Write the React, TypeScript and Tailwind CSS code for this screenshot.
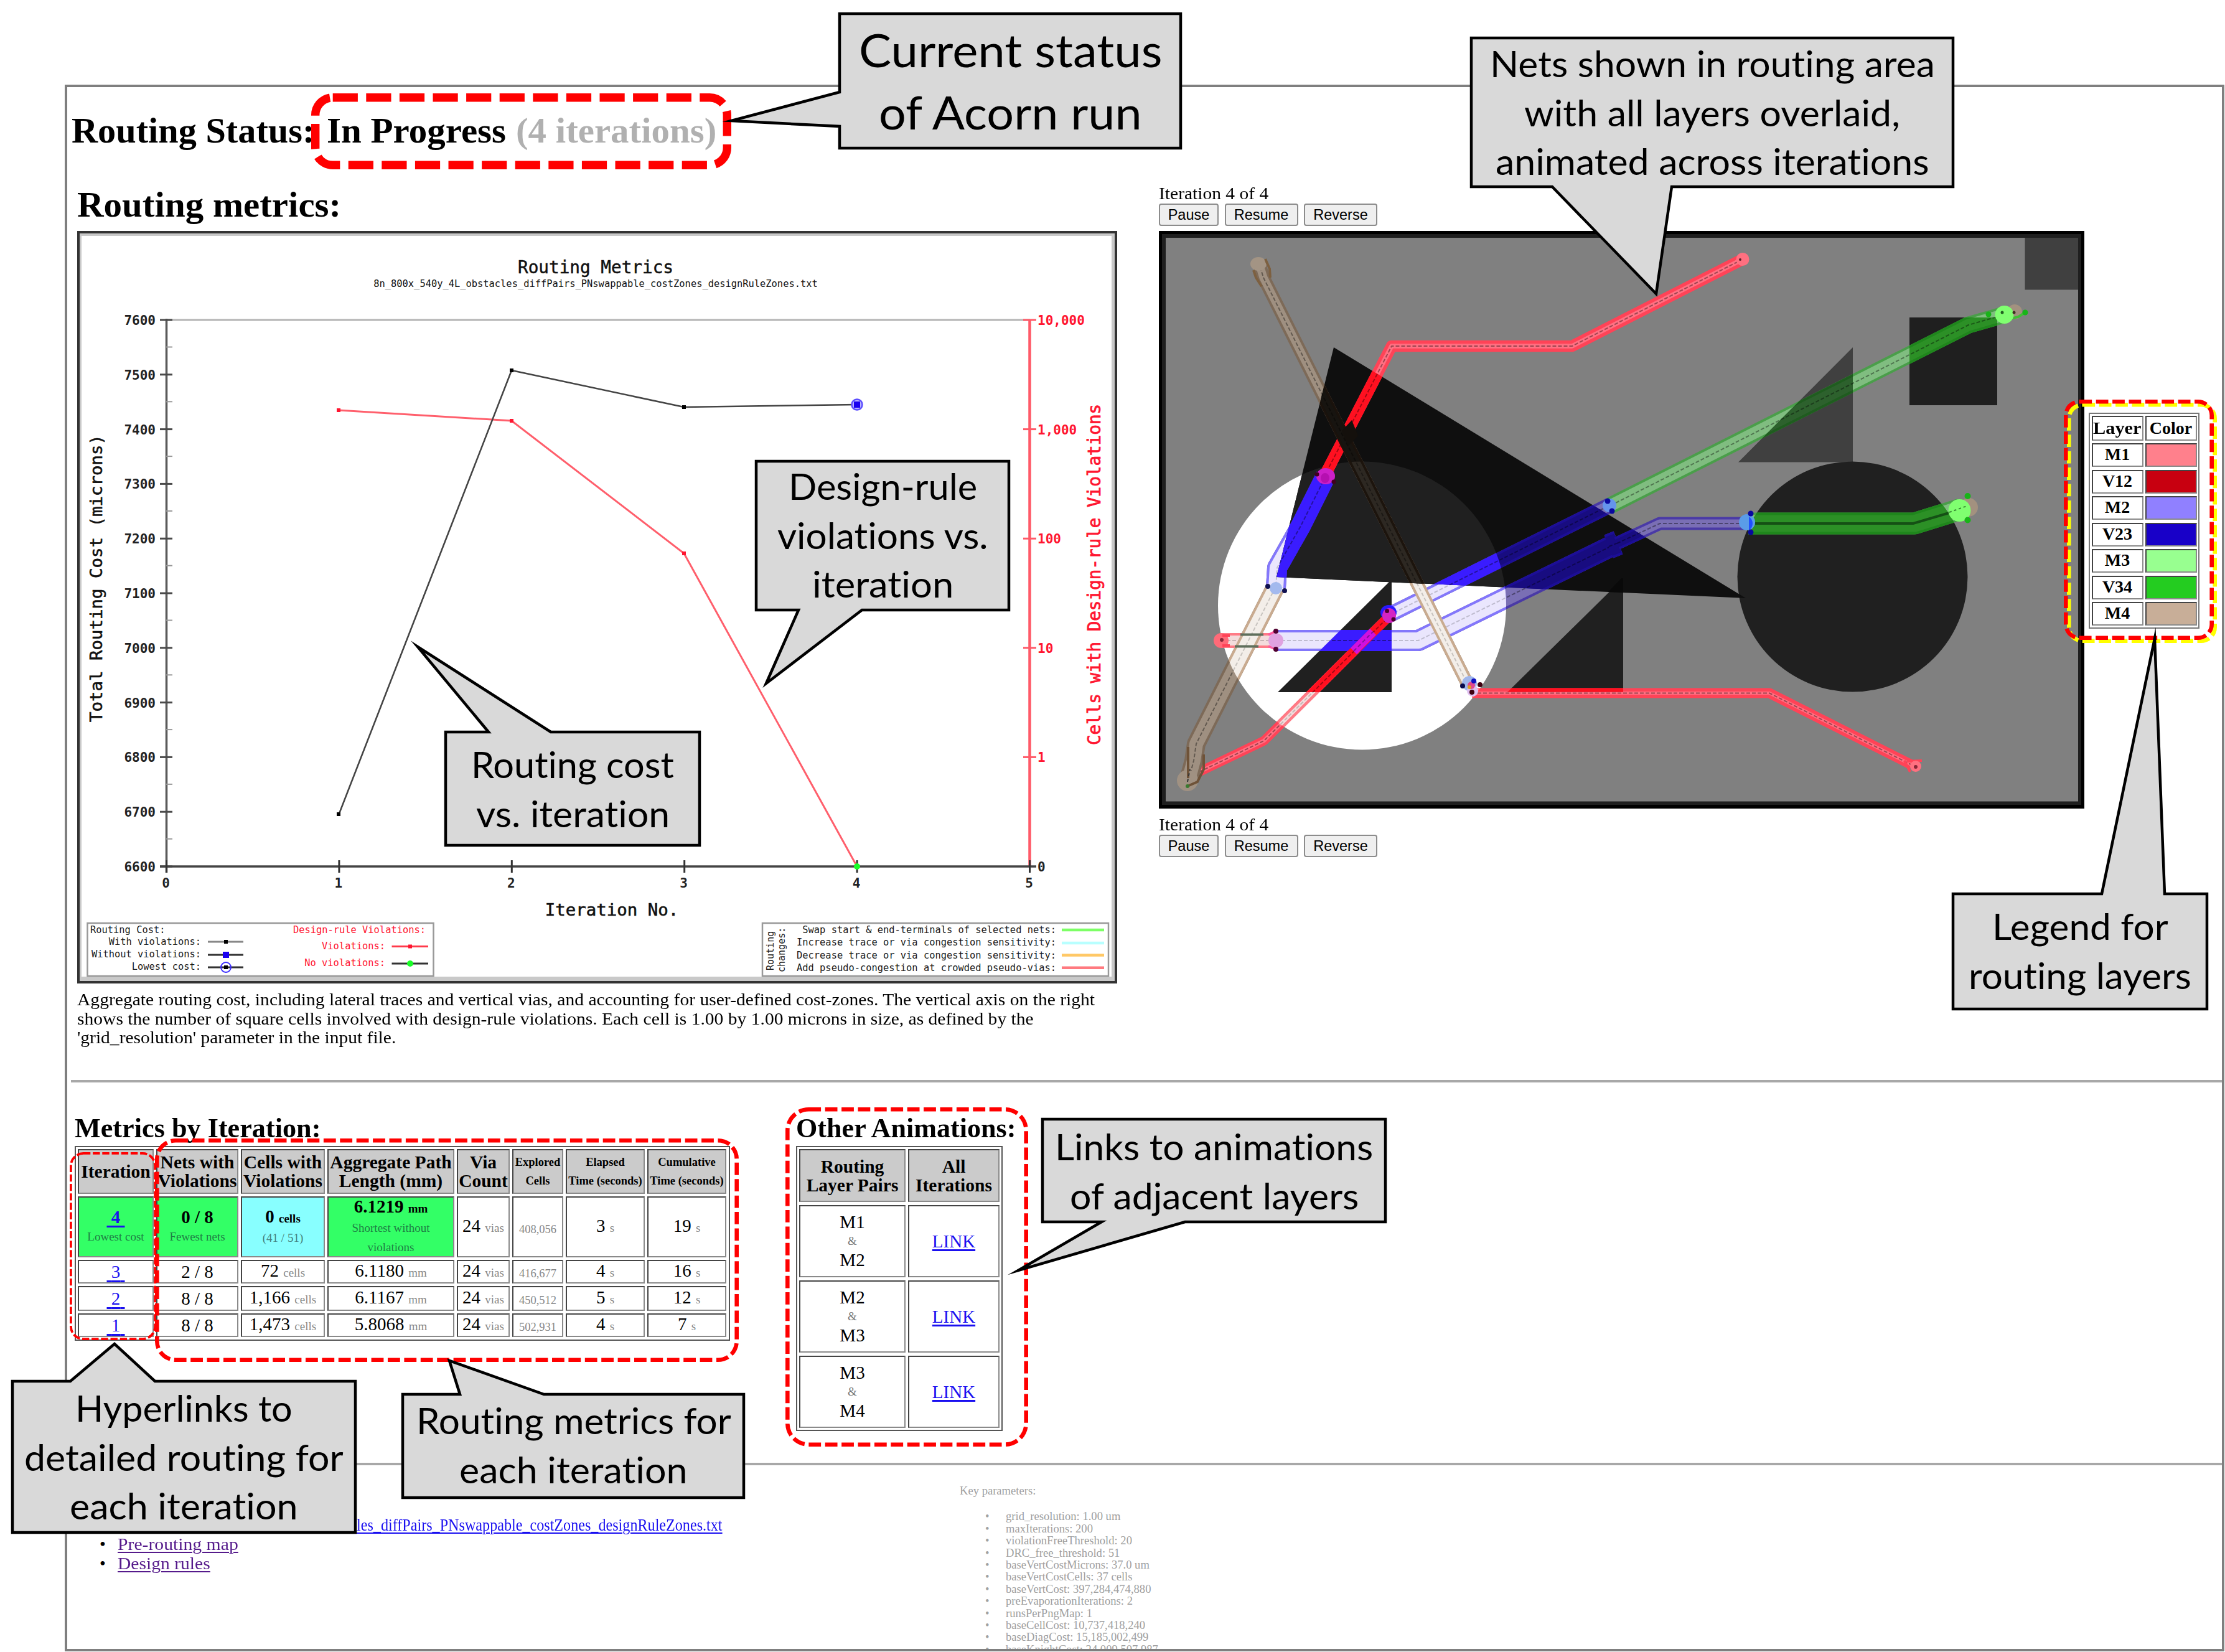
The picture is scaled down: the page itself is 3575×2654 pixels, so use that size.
import React, { useLayoutEffect, useRef, useState } from "react";

const SERIF = "font-['Liberation_Serif',serif]";

/* Stretches one line of text horizontally so that it fills its box. */
function Fit({ className = "", text = "", children }: { className?: string; text?: string; children: React.ReactNode }) {
  const outer = useRef<HTMLSpanElement>(null);
  const inner = useRef<HTMLSpanElement>(null);
  const [scale, setScale] = useState(1);
  useLayoutEffect(() => {
    if (outer.current && inner.current) {
      setScale(outer.current.clientWidth / inner.current.offsetWidth);
    }
  }, []);
  return (
    <span ref={outer} className={`block whitespace-pre ${className}`}>
      <span ref={inner} className={`inline-block origin-left align-top ${text}`} style={{ transform: `scaleX(${scale})` }}>
        {children}
      </span>
    </span>
  );
}

/* ---------- Chart ---------- */

const MONO = "'DejaVu Sans Mono', monospace";
const RED = "#ff1530";

function SmallText({ x, y, end, red, children }: { x: number; y: number; end?: boolean; red?: boolean; children: string }) {
  return (
    <text x={x} y={y} fontSize={15.4} textAnchor={end ? "end" : "start"} fill={red ? RED : "#1a1a1a"}>
      {children}
    </text>
  );
}

function MetricsChart() {
  const yLabels = [7600, 7500, 7400, 7300, 7200, 7100, 7000, 6900, 6800, 6700, 6600];
  const rLabels = ["10,000", "1,000", "100", "10", "1"];
  return (
    <svg width="1671" height="1209" viewBox="124 371 1671 1209" fontFamily={MONO} className="block">
      <rect x="124" y="371" width="1671" height="1209" fill="#333" />
      <rect x="128" y="375" width="1663" height="1201" fill="#c9c9c9" />
      <rect x="131" y="379" width="1655" height="1190" fill="#fff" />
      <text x="957" y="439" fontSize="27.7" textAnchor="middle" fill="#111" stroke="#111" strokeWidth="0.5">Routing Metrics</text>
      <text x="957" y="461" fontSize="15.4" textAnchor="middle" fill="#111">
        8n_800x_540y_4L_obstacles_diffPairs_PNswappable_costZones_designRuleZones.txt
      </text>
      <line x1="267" x2="1655" y1="514" y2="514" stroke="#b4b4b4" strokeWidth="3" />
      <line x1="267.5" x2="267.5" y1="512" y2="1402" stroke="#5a5a5a" strokeWidth="3.5" />
      {yLabels.map((v, i) => {
        const y = 514 + i * 87.8;
        return (
          <g key={v}>
            <line x1="257" x2="277" y1={y} y2={y} stroke="#4a4a4a" strokeWidth="3" />
            {i < 10 && <line x1="267" x2="277" y1={y + 43.5} y2={y + 43.5} stroke="#999" strokeWidth="2" />}
            <text x="250" y={y + 8} fontSize="21" fontWeight="bold" textAnchor="end" fill="#222">{v}</text>
          </g>
        );
      })}
      <line x1="1654.5" x2="1654.5" y1="514" y2="1392" stroke="#ff5a68" strokeWidth="4.5" />
      {rLabels.map((v, i) => {
        const y = 514 + i * 175.6;
        return (
          <g key={v}>
            <line x1="1644" x2="1665" y1={y} y2={y} stroke="#ff5a68" strokeWidth="3" />
            <text x="1667" y={y + 8} fontSize="21" fontWeight="bold" fill={RED}>{v}</text>
          </g>
        );
      })}
      <line x1="257" x2="1665" y1="1392" y2="1392" stroke="#444" strokeWidth="3.5" />
      {[0, 1, 2, 3, 4, 5].map((v) => {
        const x = 267.5 + v * 277.4;
        return (
          <g key={v}>
            <line x1={x} x2={x} y1="1382" y2="1402" stroke="#333" strokeWidth="3" />
            <text x={x - 1} y="1426" fontSize="21" fontWeight="bold" textAnchor="middle" fill="#222">{v}</text>
          </g>
        );
      })}
      <text x="1667" y="1400" fontSize="21" fontWeight="bold" fill="#222">0</text>
      <text x="983" y="1471" fontSize="27.4" textAnchor="middle" fill="#111" stroke="#111" strokeWidth="0.6">Iteration No.</text>
      <text transform="translate(164 929) rotate(-90)" fontSize="27.4" textAnchor="middle" fill="#111" stroke="#111" strokeWidth="0.6">
        Total Routing Cost (microns)
      </text>
      <text transform="translate(1768 923) rotate(-90)" fontSize="27.6" textAnchor="middle" fill={RED} stroke={RED} strokeWidth="0.8">
        Cells with Design-rule Violations
      </text>
      <polyline points="544,659 822,676 1099,889 1377,1392" fill="none" stroke="#ff5f6c" strokeWidth="3" />
      <polyline points="544.6,1308 822,595 1099,654 1377,650" fill="none" stroke="#444" strokeWidth="2.6" />
      {[[544, 659], [822, 676], [1099, 889]].map(([x, y]) => (
        <rect key={x} x={x - 3} y={y - 3} width="6" height="6" fill={RED} />
      ))}
      {[[544, 1308], [822, 595], [1099, 654]].map(([x, y]) => (
        <rect key={x} x={x - 3} y={y - 3} width="6" height="6" fill="#000" />
      ))}
      <circle cx="1377" cy="650" r="8.5" fill="#b9b4ff" stroke="#5a4cff" strokeWidth="2.5" />
      <rect x="1372" y="645" width="10" height="10" fill="#1a00f0" />
      <circle cx="1377" cy="1392" r="5" fill="#1aff28" />

      <rect x="140.5" y="1483" width="556" height="85" fill="none" stroke="#999" strokeWidth="2.5" />
      <SmallText x={145} y={1499}>Routing Cost:</SmallText>
      <SmallText x={323} y={1518} end>With violations:</SmallText>
      <SmallText x={323} y={1538} end>Without violations:</SmallText>
      <SmallText x={323} y={1558} end>Lowest cost:</SmallText>
      <line x1="334" x2="391" y1="1513" y2="1513" stroke="#888" strokeWidth="3" />
      <rect x="360" y="1510" width="6" height="6" />
      <line x1="334" x2="391" y1="1534" y2="1534" stroke="#333" strokeWidth="3" />
      <rect x="358" y="1529" width="10" height="10" fill="#1a00f0" />
      <line x1="334" x2="391" y1="1554" y2="1554" stroke="#333" strokeWidth="3" />
      <circle cx="363" cy="1554" r="8" fill="none" stroke="#3a2cff" strokeWidth="2" />
      <rect x="360" y="1551" width="6" height="6" />
      <SmallText x={684} y={1499} end red>Design-rule Violations:</SmallText>
      <SmallText x={619} y={1525} end red>Violations:</SmallText>
      <SmallText x={619} y={1552} end red>No violations:</SmallText>
      <line x1="629.5" x2="688" y1="1520.5" y2="1520.5" stroke="#ff3a4a" strokeWidth="3" />
      <rect x="656" y="1517.5" width="6" height="6" fill={RED} />
      <line x1="629.5" x2="688" y1="1548" y2="1548" stroke="#333" strokeWidth="3" />
      <circle cx="659" cy="1548" r="5" fill="#1aff28" />

      <rect x="1225" y="1483" width="556" height="85" fill="none" stroke="#999" strokeWidth="2.5" />
      <text transform="translate(1243 1559) rotate(-90)" fontSize="15" fill="#1a1a1a">Routing</text>
      <text transform="translate(1261 1562) rotate(-90)" fontSize="15" fill="#1a1a1a">changes:</text>
      <SmallText x={1697} y={1499} end>{"Swap start & end-terminals of selected nets:"}</SmallText>
      <SmallText x={1697} y={1519} end>Increase trace or via congestion sensitivity:</SmallText>
      <SmallText x={1697} y={1540} end>Decrease trace or via congestion sensitivity:</SmallText>
      <SmallText x={1697} y={1559.5} end>Add pseudo-congestion at crowded pseudo-vias:</SmallText>
      {[["#7dff66", 1494], ["#b8ffff", 1515], ["#ffc866", 1534.6], ["#ff7a80", 1554.7]].map(([c, y]) => (
        <line key={c} x1="1706" x2="1774" y1={y} y2={y} stroke={c as string} strokeWidth="4.5" />
      ))}
    </svg>
  );
}

/* ---------- Routing area ---------- */

type Layer = "M1" | "M2" | "M3" | "M4";
type Ground = "gray" | "white" | "dark" | "lit" | "deep" | "mid";

const PALETTE: Record<Ground, Record<Layer, [string, string]>> = {
  gray: { M1: ["#ff4357", "#ff7082"], M2: ["#4a3aa6", "#7a6fb4"], M3: ["#4a9e4a", "#80bd80"], M4: ["#7d6a58", "#9f9081"] },
  white: { M1: ["#ff7b86", "#f3dcdc"], M2: ["#8377fb", "#eae6fd"], M3: ["#4a9e4a", "#80bd80"], M4: ["#c9ab90", "#f3eee9"] },
  dark: { M1: ["#ff1020", "#e8283a"], M2: ["#3317d8", "#3a1cff"], M3: ["#1f861c", "#2c9026"], M4: ["#1c140d", "#2b2620"] },
  lit: { M1: ["#ff1020", "#ff1020"], M2: ["#3a1cff", "#3a1cff"], M3: ["#1f861c", "#2c9026"], M4: ["#1c140d", "#2d2822"] },
  deep: { M1: ["#ff1020", "#ff1020"], M2: ["#1c0e96", "#180c80"], M3: ["#1f861c", "#2c9026"], M4: ["#1a120c", "#171410"] },
  mid: { M1: ["#ff1020", "#ff1020"], M2: ["#180c80", "#180c80"], M3: ["#1f5c1f", "#2d612d"], M4: ["#1a120c", "#171410"] },
};

const NETS: { layer: Layer; w: number; d: string; edge?: number }[] = [
  { layer: "M2", w: 32, d: "M2130 765 L2090 845 L2052 912 L2050 944" },
  { layer: "M2", w: 34, d: "M2050 1029 H2279 L2598 873" },
  { layer: "M2", w: 40, d: "M2585 878 L2600 872" },
  { layer: "M2", w: 21, d: "M2598 873 L2667 841 H2809" },
  { layer: "M2", w: 25, d: "M2232 988 L2586 812" },
  { layer: "M3", w: 27, d: "M2588 812 L3163 522 L3219 506" },
  { layer: "M3", w: 35, d: "M2809 841 H3076 L3150 818" },
  { layer: "M1", w: 18.5, d: "M2800 416.5 L2526 556 H2236 L2130 761", edge: 5.5 },
  { layer: "M1", w: 24, d: "M1962 1029 H2040" },
  { layer: "M1", w: 15, d: "M1927 1240 L2031 1190 L2232 990", edge: 4.5 },
  { layer: "M1", w: 16, d: "M2365 1113.5 H2843 L3072 1229", edge: 5.5 },
  { layer: "M4", w: 21, d: "M2022 420 L2030 446 L2359 1101" },
  { layer: "M4", w: 30, d: "M2049 944 L1922 1195 L1918 1222 L1910 1252" },
];

function Nets({ ground }: { ground: Ground }) {
  return (
    <g fill="none" strokeLinejoin="round">
      {NETS.map((n, i) => {
        const [edge, inner] = PALETTE[ground][n.layer];
        return (
          <g key={i}>
            <path d={n.d} stroke={edge} strokeWidth={n.w} />
            <path d={n.d} stroke={inner} strokeWidth={n.w - 2 * (n.edge ?? 4)} />
            <path d={n.d} stroke="#000" strokeOpacity={ground === "white" ? 0.18 : 0.38} strokeWidth="2" strokeDasharray="6 3" />
          </g>
        );
      })}
    </g>
  );
}

const BIG_TRI = "M2143 558 L2805 961 L2051 927 Z";
const TRI_1 = "M2053 1112 H2236 V931 Z";
const TRI_2 = "M2422 1112 H2608 V929 Z";
const TRI_3 = "M2793 742.5 H2977 V558 Z";

function RoutingMap() {
  return (
    <svg width="1487" height="928" viewBox="1862 371 1487 928" className="block">
      <defs>
        <clipPath id="zone-white"><circle cx="2188.5" cy="973" r="231.5" /></clipPath>
        <clipPath id="zone-dark">
          <path d={TRI_2} />
          <circle cx="2976.5" cy="926.5" r="185" />
          <rect x="3068" y="510" width="141" height="141" />
        </clipPath>
        <clipPath id="zone-deep"><path d={BIG_TRI} /></clipPath>
        <clipPath id="zone-lit"><path d={BIG_TRI} clipPath="url(#zone-white)" /><path d={TRI_1} /></clipPath>
        <clipPath id="zone-mid"><path d={TRI_3} /></clipPath>
      </defs>
      <rect x="1862" y="371" width="1487" height="928" fill="#000" />
      <rect x="1867" y="376" width="1477" height="917" fill="#1f1f1f" />
      <rect x="1873" y="382" width="1466" height="905.5" fill="#808080" />
      <rect x="3253.5" y="382" width="85.5" height="83.5" fill="#404040" />
      <path d={TRI_3} fill="#404040" />
      <rect x="3068" y="510" width="141" height="141" fill="#1f1f1f" />
      <circle cx="2976.5" cy="926.5" r="185" fill="#202020" />
      <circle cx="2188.5" cy="973" r="231.5" fill="#fff" />
      <path d={TRI_1} fill="#202020" />
      <path d={TRI_2} fill="#202020" />
      <path d={BIG_TRI} fill="#0f0f0f" />
      <path d={BIG_TRI} fill="#202020" clipPath="url(#zone-white)" />
      <path d="M2605.5 929 L2608 929 V952 L2584 951 Z" fill="#090909" />
      <Nets ground="gray" />
      <g clipPath="url(#zone-white)"><Nets ground="white" /></g>
      <g clipPath="url(#zone-dark)"><Nets ground="dark" /></g>
      <g clipPath="url(#zone-mid)"><Nets ground="mid" /></g>
      <g clipPath="url(#zone-deep)"><Nets ground="deep" /></g>
      <g clipPath="url(#zone-lit)"><Nets ground="lit" /></g>
      <path d="M2820 841 H3074 L3135 823" fill="none" stroke="#155015" strokeWidth="4" />
      <path d="M2172 675 L2182 700 L2166 717 L2156 692 Z" fill="#14100c" />

      <ellipse cx="2022" cy="424" rx="13" ry="11" fill="#a39484" />
      <path d="M2033 416 L2040 432 L2041 446" fill="none" stroke="#7d6040" strokeWidth="4" />
      <path d="M2014 434 L2018 446 L2027 460" fill="none" stroke="#7d6040" strokeWidth="4" />
      <circle cx="2800" cy="416.5" r="10.5" fill="#ff7080" />
      <circle cx="2796" cy="417" r="2" fill="#5a2028" />
      <ellipse cx="2130" cy="765" rx="15" ry="13" fill="#cc20c8" />
      <ellipse cx="2129" cy="768" rx="7" ry="8" fill="#b510b0" />
      <circle cx="2116" cy="762" r="3.5" fill="#400020" />
      <circle cx="2143" cy="774" r="3.5" fill="#400020" />
      <circle cx="2050" cy="945" r="10" fill="#a3b9ee" />
      <circle cx="2037" cy="942" r="4" fill="#101050" />
      <circle cx="2064" cy="949" r="4" fill="#101050" />
      <circle cx="1962" cy="1029" r="12" fill="#ff6a78" />
      <path d="M1964 1021 H1976 M1964 1037 H1976" stroke="#ff4357" strokeWidth="4" />
      <circle cx="1963" cy="1028" r="3" fill="#8a2838" />
      <path d="M2038 1020 L2050 1014 M2038 1038 L2050 1043" stroke="#ff5aa0" strokeWidth="4" />
      <path d="M1993 1019.5 H2030 M1984 1038.5 H2022" stroke="#5f6f5c" strokeWidth="4" />
      <circle cx="2050" cy="1029" r="12" fill="#e0a2e0" />
      <circle cx="2050" cy="1014" r="4" fill="#500030" />
      <circle cx="2050" cy="1043" r="4" fill="#500030" />
      <ellipse cx="2231" cy="984" rx="13" ry="12" fill="#2a18ff" />
      <ellipse cx="2232" cy="989" rx="11" ry="12" fill="#d424c4" />
      <circle cx="2228.6" cy="981.5" r="3.5" fill="#500030" />
      <circle cx="2239" cy="995" r="3.5" fill="#500030" />
      <path d="M2175 1046 L2206 1015" stroke="#d010e0" strokeWidth="14" />
      <path d="M2175 1046 L2206 1015" stroke="#8010a0" strokeWidth="2" strokeDasharray="6 4" />
      <circle cx="2586" cy="812" r="11" fill="#6594ec" />
      <circle cx="2583" cy="805" r="4.5" fill="#0a08a0" />
      <circle cx="2590" cy="821" r="4.5" fill="#0a08a0" />
      <circle cx="2807" cy="839" r="13" fill="#5a9ce8" />
      <path d="M2810 830 A 13 13 0 0 1 2810 852 Z" fill="#2050ff" />
      <circle cx="2813" cy="825" r="4.5" fill="#0808a0" />
      <circle cx="2813" cy="855" r="4.5" fill="#0808a0" />
      <circle cx="3163" cy="815" r="15" fill="#a3917f" />
      <circle cx="3148.5" cy="820" r="18" fill="#80ff70" />
      <path d="M3132 823 L3160 813" stroke="#3a8a34" strokeWidth="2" strokeDasharray="4 4" />
      <circle cx="3161.5" cy="797" r="5" fill="#18b418" />
      <circle cx="3161.5" cy="835.5" r="5" fill="#18b418" />
      <circle cx="3237" cy="501" r="12" fill="#a3917f" />
      <path d="M3226 513 L3243 509 L3254 502" fill="none" stroke="#3fbf35" strokeWidth="4" />
      <ellipse cx="3220.5" cy="505.6" rx="15" ry="14.5" fill="#80ff70" />
      <circle cx="3217" cy="502" r="2.5" fill="#206020" />
      <circle cx="3236" cy="502" r="2.5" fill="#403020" />
      <circle cx="3254" cy="502" r="4.5" fill="#18b418" />
      <circle cx="3195" cy="505" r="4.5" fill="#18b418" />
      <ellipse cx="1908" cy="1254" rx="17" ry="17" fill="#a09182" />
      <path d="M1909 1200 V1250 M1934 1212 V1236 L1924 1256 L1908 1263" fill="none" stroke="#6e5238" strokeWidth="4" />
      <circle cx="1908" cy="1263" r="3" fill="#3a7a30" />
      <path d="M1908 1256 L1912 1236" stroke="#333" strokeWidth="2" strokeDasharray="5 4" />
      <circle cx="2361" cy="1098" r="12" fill="#9fb6ec" />
      <circle cx="2366" cy="1110" r="9" fill="#e0c0f0" />
      <circle cx="2364" cy="1101" r="6" fill="#e04890" />
      <circle cx="2361" cy="1104" r="3" fill="#e0a020" />
      <circle cx="2350" cy="1102" r="4" fill="#08084a" />
      <circle cx="2368" cy="1094" r="4" fill="#1010c0" />
      <circle cx="2378" cy="1100" r="4" fill="#400010" />
      <circle cx="2365" cy="1112" r="4" fill="#400010" />
      <path d="M3060 1222 L3069 1240 M3064 1223 L3088 1222" stroke="#ff4357" strokeWidth="4" />
      <circle cx="3078" cy="1231" r="9" fill="#ff7080" />
      <circle cx="3078" cy="1232" r="3" fill="#8a2838" />
    </svg>
  );
}

function Controls() {
  return (
    <div>
      <div className="h-[30px] text-[27.5px] leading-[28px]">
        <Fit className="w-[176px]">Iteration 4 of 4</Fit>
      </div>
      <div className="flex h-[36px] gap-[9.5px] font-['Liberation_Sans',sans-serif] text-[23.5px] leading-[30px]">
        {[["Pause", "w-[96px]"], ["Resume", "w-[118px]"], ["Reverse", "w-[118px]"]].map(([label, w]) => (
          <button key={label} className={`${w} rounded-[4px] border-[2.5px] border-[#8c8c8c] bg-[#efefef] text-center`}>
            {label}
          </button>
        ))}
      </div>
    </div>
  );
}

const CELL = "flex items-center justify-center border-[2px] border-t-[#444] border-l-[#444] border-r-[#8a8a8a] border-b-[#8a8a8a]";

function LayerLegend() {
  const rows = [
    ["M1", "bg-[#ff808c]"], ["V12", "bg-[#c80010]"], ["M2", "bg-[#9080ff]"], ["V23", "bg-[#1800c8]"],
    ["M3", "bg-[#98ff90]"], ["V34", "bg-[#24cc20]"], ["M4", "bg-[#c8ae98]"],
  ];
  return (
    <div className="mt-[369px] ml-[7px] grid h-[347px] w-[178px] grid-cols-[83px_83px] grid-rows-[40px_repeat(7,38px)] content-between justify-between border-[2.5px] border-[#777] bg-white p-[2.5px] text-[28px] leading-[34px] font-bold">
      <div className={CELL}><Fit className="w-[78px]">Layer</Fit></div>
      <div className={CELL}>Color</div>
      {rows.map(([name, bg]) => (
        <React.Fragment key={name}>
          <div className={`${CELL} pb-[2px]`}>{name}</div>
          <div className={`${CELL} ${bg}`} />
        </React.Fragment>
      ))}
    </div>
  );
}

/* ---------- Tables ---------- */

const TABLE = "border-[2px] border-[#555] p-[3px]";

function Unit({ children, bold }: { children: string; bold?: boolean }) {
  return <span className={`text-[19px] ${bold ? "" : "text-[#888]"}`}> {children}</span>;
}

function Head({ lines, small }: { lines: string[]; small?: boolean }) {
  return (
    <div className={`${CELL} flex-col bg-[#cbcbcb] font-bold whitespace-nowrap ${small ? "text-[18.5px]" : "text-[29.5px]"} leading-[30px]`}>
      {lines.map((l) => <div key={l}>{l}</div>)}
    </div>
  );
}

function MetricsTable() {
  const rows = [
    ["3", "2 / 8", "72", "6.1180", "416,677", "4", "16"],
    ["2", "8 / 8", "1,166", "6.1167", "450,512", "5", "12"],
    ["1", "8 / 8", "1,473", "5.8068", "502,931", "4", "7"],
  ];
  const link = "text-[#1a10f0] underline decoration-[3px] underline-offset-[4px]";
  const note = "text-[19px] leading-[31px] text-[#1f7f45]";
  return (
    <div className={`${TABLE} grid h-[313px] w-[1053px] grid-cols-[122px_132px_135px_204px_85px_82px_127px_127px] grid-rows-[72px_98px_38px_40px_38px] gap-[4px] text-[29px] leading-[31px] whitespace-nowrap`}>
      <Head lines={["Iteration"]} />
      <Head lines={["Nets with", "Violations"]} />
      <Head lines={["Cells with", "Violations"]} />
      <Head lines={["Aggregate Path", "Length (mm)"]} />
      <Head lines={["Via", "Count"]} />
      <Head small lines={["Explored", "Cells"]} />
      <Head small lines={["Elapsed", "Time (seconds)"]} />
      <Head small lines={["Cumulative", "Time (seconds)"]} />

      <div className={`${CELL} flex-col bg-[#33ff66]`}>
        <div className={`${link} font-bold`}>&nbsp;4&nbsp;</div>
        <div className={note}>Lowest cost</div>
      </div>
      <div className={`${CELL} flex-col bg-[#33ff66]`}>
        <div className="font-bold">0 / 8</div>
        <div className={note}>Fewest nets</div>
      </div>
      <div className={`${CELL} flex-col bg-[#88ffff]`}>
        <div className="font-bold">0 <Unit bold>cells</Unit></div>
        <div className="text-[19px] leading-[31px] text-[#447f7f]">(41 / 51)</div>
      </div>
      <div className={`${CELL} flex-col bg-[#33ff66]`}>
        <div className="font-bold">6.1219 <Unit bold>mm</Unit></div>
        <div className={note}>Shortest without</div>
        <div className={note}>violations</div>
      </div>
      <div className={CELL}><div>24 <Unit>vias</Unit></div></div>
      <div className={`${CELL} pt-[8px] text-[18.5px] text-[#888]`}>408,056</div>
      <div className={CELL}><div>3 <Unit>s</Unit></div></div>
      <div className={CELL}><div>19 <Unit>s</Unit></div></div>

      {rows.map((r) => (
        <React.Fragment key={r[0]}>
          <div className={CELL}><div className={link}>&nbsp;{r[0]}&nbsp;</div></div>
          <div className={CELL}>{r[1]}</div>
          <div className={CELL}><div>{r[2]} <Unit>cells</Unit></div></div>
          <div className={CELL}><div>{r[3]} <Unit>mm</Unit></div></div>
          <div className={CELL}><div>24 <Unit>vias</Unit></div></div>
          <div className={`${CELL} pt-[6px] text-[18.5px] text-[#888]`}>{r[4]}</div>
          <div className={CELL}><div>{r[5]} <Unit>s</Unit></div></div>
          <div className={CELL}><div>{r[6]} <Unit>s</Unit></div></div>
        </React.Fragment>
      ))}
    </div>
  );
}

function AnimationsTable() {
  return (
    <div className={`${TABLE} grid h-[458px] w-[332px] grid-cols-[171px_147px] grid-rows-[85px_repeat(3,116px)] gap-x-[4px] gap-y-[5px] text-[29px] leading-[30.5px]`}>
      <Head lines={["Routing", "Layer Pairs"]} />
      <Head lines={["All", "Iterations"]} />
      {[["M1", "M2"], ["M2", "M3"], ["M3", "M4"]].map(([a, b]) => (
        <React.Fragment key={a}>
          <div className={`${CELL} flex-col`}>
            <div>{a}</div>
            <div className="text-[19px] text-[#777]">&amp;</div>
            <div>{b}</div>
          </div>
          <div className={CELL}>
            <a className="text-[#1a10f0] underline decoration-[3px] underline-offset-[3px]">LINK</a>
          </div>
        </React.Fragment>
      ))}
    </div>
  );
}

/* ---------- Annotations ---------- */

function Callout({ box, path, big, lines }: { box: string; path: string; big?: boolean; lines: [string, string][] }) {
  return (
    <div className={`absolute flex flex-col items-center font-['Lato',sans-serif] text-black [font-variant-ligatures:none] ${big ? "text-[74px] leading-[100px]" : "text-[58px] leading-[78.5px]"} ${box}`}>
      <svg className="absolute top-0 left-0 overflow-visible" width="10" height="10">
        <path d={path} fill="#d9d9d9" stroke="#000" strokeWidth="4.5" strokeMiterlimit="10" />
      </svg>
      {lines.map(([text, w]) => (
        <Fit key={text} className={`relative top-[2px] ${w}`}>{text}</Fit>
      ))}
    </div>
  );
}

function DashedBox({ pos, w, h, r, s, color = "#ff0000" }: { pos: string; w: number; h: number; r: number; s: number; color?: string }) {
  return (
    <svg className={`absolute overflow-visible ${pos}`} width={w} height={h}>
      <rect x={s / 2} y={s / 2} width={w - s} height={h - s} rx={r} fill="none" stroke={color} strokeWidth={s} strokeDasharray={`${s * 3} ${s}`} />
    </svg>
  );
}

const PARAMS = [
  "grid_resolution: 1.00 um", "maxIterations: 200", "violationFreeThreshold: 20", "DRC_free_threshold: 51",
  "baseVertCostMicrons: 37.0 um", "baseVertCostCells: 37 cells", "baseVertCost: 397,284,474,880",
  "preEvaporationIterations: 2", "runsPerPngMap: 1", "baseCellCost: 10,737,418,240",
  "baseDiagCost: 15,185,002,499", "baseKnightCost: 24,009,507,987",
];

export default function App() {
  return (
    <div className={`relative h-[2654px] w-[3575px] overflow-hidden bg-white pt-[136px] pl-[104px] text-black ${SERIF}`}>
      <main className="flex h-[2517px] w-[3470px] flex-col overflow-hidden border-[4px] border-[#7f7f7f]">
        <h1 className="mt-[35px] ml-[7px] flex h-[70px] shrink-0 text-[58px] leading-[70px] font-bold">
          <Fit className="w-[390px]">Routing Status:</Fit>
          <Fit className="ml-[20px] w-[288px]">In Progress</Fit>
          <Fit className="ml-[16px] w-[322px] text-[#b0b0b0]">(4 iterations)</Fit>
        </h1>

        <section className="mt-[49px] ml-[16px] flex h-[1441px] shrink-0 items-start">
          <div className="w-[1671px]">
            <h2 className="mb-[7px] h-[70px] text-[58px] leading-[70px] font-bold">
              <Fit className="w-[424px]">Routing metrics:</Fit>
            </h2>
            <MetricsChart />
            <div className="mt-[11px] text-[27.5px] leading-[30.7px]">
              <Fit className="w-[1635px]">Aggregate routing cost, including lateral traces and vertical vias, and accounting for user-defined cost-zones. The vertical axis on the right</Fit>
              <Fit className="w-[1537px]">shows the number of square cells involved with design-rule violations. Each cell is 1.00 by 1.00 microns in size, as defined by the</Fit>
              <Fit className="w-[512px]">'grid_resolution' parameter in the input file.</Fit>
            </div>
          </div>
          <div className="mt-[3px] ml-[67px] w-[1487px]">
            <Controls />
            <div className="mt-[8px] mb-[12px]"><RoutingMap /></div>
            <Controls />
          </div>
          <LayerLegend />
        </section>

        <hr className="ml-[6px] h-[4px] shrink-0 border-0 bg-[#a8a8a8]" />

        <section className="mt-[49px] ml-[12px] flex h-[562px] shrink-0 gap-[106px]">
          <div className="w-[1053px]">
            <h3 className="mb-[3px] h-[50px] text-[44px] leading-[50px] font-bold"><Fit className="w-[395px]">Metrics by Iteration:</Fit></h3>
            <MetricsTable />
          </div>
          <div>
            <h3 className="mb-[3px] h-[50px] text-[44px] leading-[50px] font-bold"><Fit className="w-[353px]">Other Animations:</Fit></h3>
            <AnimationsTable />
          </div>
        </section>

        <hr className="ml-[6px] h-[4px] shrink-0 border-0 bg-[#a8a8a8]" />

        <section className="flex h-[295px] shrink-0 overflow-hidden">
          <ul className="mt-[81px] ml-[52px] w-[1382px] text-[28px] leading-[30.7px]">
            <li className="flex h-[31px]">
              <span className="ml-[159px] h-[29px] w-[254px] border-b-[2px] border-[#1a10f0]" />
              <Fit className="w-[588px]" text="text-[#1a10f0] underline decoration-[2px] underline-offset-[3px]">les_diffPairs_PNswappable_costZones_designRuleZones.txt</Fit>
            </li>
            {[["Pre-routing map", "w-[194px]"], ["Design rules", "w-[149px]"]].map(([t, w]) => (
              <li key={t} className="flex">
                <span className="mr-[19px] w-[10px]">•</span>
                <Fit className={w} text="text-[#551a8b] underline decoration-[2px] underline-offset-[3px]">{t}</Fit>
              </li>
            ))}
          </ul>
          <div className="mt-[31px] text-[18.6px] leading-[19.4px] text-[#a0a0a0]">
            <div className="mb-[22px]">Key parameters:</div>
            {PARAMS.map((p) => (
              <div key={p} className="ml-[41px] flex">
                <span className="w-[33px]">•</span>
                <span>{p}</span>
              </div>
            ))}
          </div>
        </section>
      </main>

      <DashedBox pos="left-[500px] top-[150px]" w={675} h={122} r={28} s={13.4} />
      <DashedBox pos="left-[3321px] top-[647px]" w={241} h={386} r={22} s={6.6} color="#ffff00" />
      <DashedBox pos="left-[3316px] top-[642px]" w={241} h={386} r={22} s={6.6} />
      <DashedBox pos="left-[249px] top-[1829px]" w={938} h={359} r={30} s={6.6} />
      <DashedBox pos="left-[112px] top-[1851px]" w={139} h={302} r={20} s={3.8} />
      <DashedBox pos="left-[1262px] top-[1779px]" w={390} h={545} r={34} s={6.6} />

      <Callout big box="left-[1347px] top-[20px] w-[552px] h-[220px] pt-[8px]" path="M2 2 H550 V218 H2 V183 L-172 174 L2 128 Z"
        lines={[["Current status", "w-[487px]"], ["of Acorn run", "w-[423px]"]]} />
      <Callout box="left-[2362px] top-[59px] w-[778px] h-[243px] pt-[2px]" path="M2 2 H776 V241 H324 L299 413 L132 241 H2 Z"
        lines={[["Nets shown in routing area", "w-[715px]"], ["with all layers overlaid,", "w-[604px]"], ["animated across iterations", "w-[697px]"]]} />
      <Callout box="left-[1213px] top-[739px] w-[410px] h-[243px] pt-[1px]" path="M2 2 H408 V241 H172 L18 359 L70 241 H2 Z"
        lines={[["Design-rule", "w-[303px]"], ["violations vs.", "w-[339px]"], ["iteration", "w-[227px]"]]} />
      <Callout box="left-[714px] top-[1174px] w-[412px] h-[186px] pt-[13px]" path="M2 2 H71 L-43 -135 L171 2 H410 V184 H2 Z"
        lines={[["Routing cost", "w-[326px]"], ["vs. iteration", "w-[311px]"]]} />
      <Callout box="left-[3136px] top-[1434px] w-[412px] h-[190px] pt-[13px]" path="M2 2 H241 L326 -408 L342 2 H410 V187 H2 Z"
        lines={[["Legend for", "w-[283px]"], ["routing layers", "w-[358px]"]]} />
      <Callout box="left-[18px] top-[2217px] w-[555px] h-[247px] pt-[4px]" path="M2 2 H95 L166 -58 L231 2 H553 V245 H2 Z"
        lines={[["Hyperlinks to", "w-[349px]"], ["detailed routing for", "w-[513px]"], ["each iteration", "w-[367px]"]]} />
      <Callout box="left-[645px] top-[2238px] w-[553px] h-[171px] pt-[3px]" path="M2 2 H94 L77 -52 L229 2 H550 V168 H2 Z"
        lines={[["Routing metrics for", "w-[506px]"], ["each iteration", "w-[367px]"]]} />
      <Callout box="left-[1673px] top-[1796px] w-[555px] h-[169px] pt-[5px]" path="M2 2 H553 V167 H231 L-37 245 L97 167 H2 Z"
        lines={[["Links to animations", "w-[511px]"], ["of adjacent layers", "w-[464px]"]]} />
    </div>
  );
}
